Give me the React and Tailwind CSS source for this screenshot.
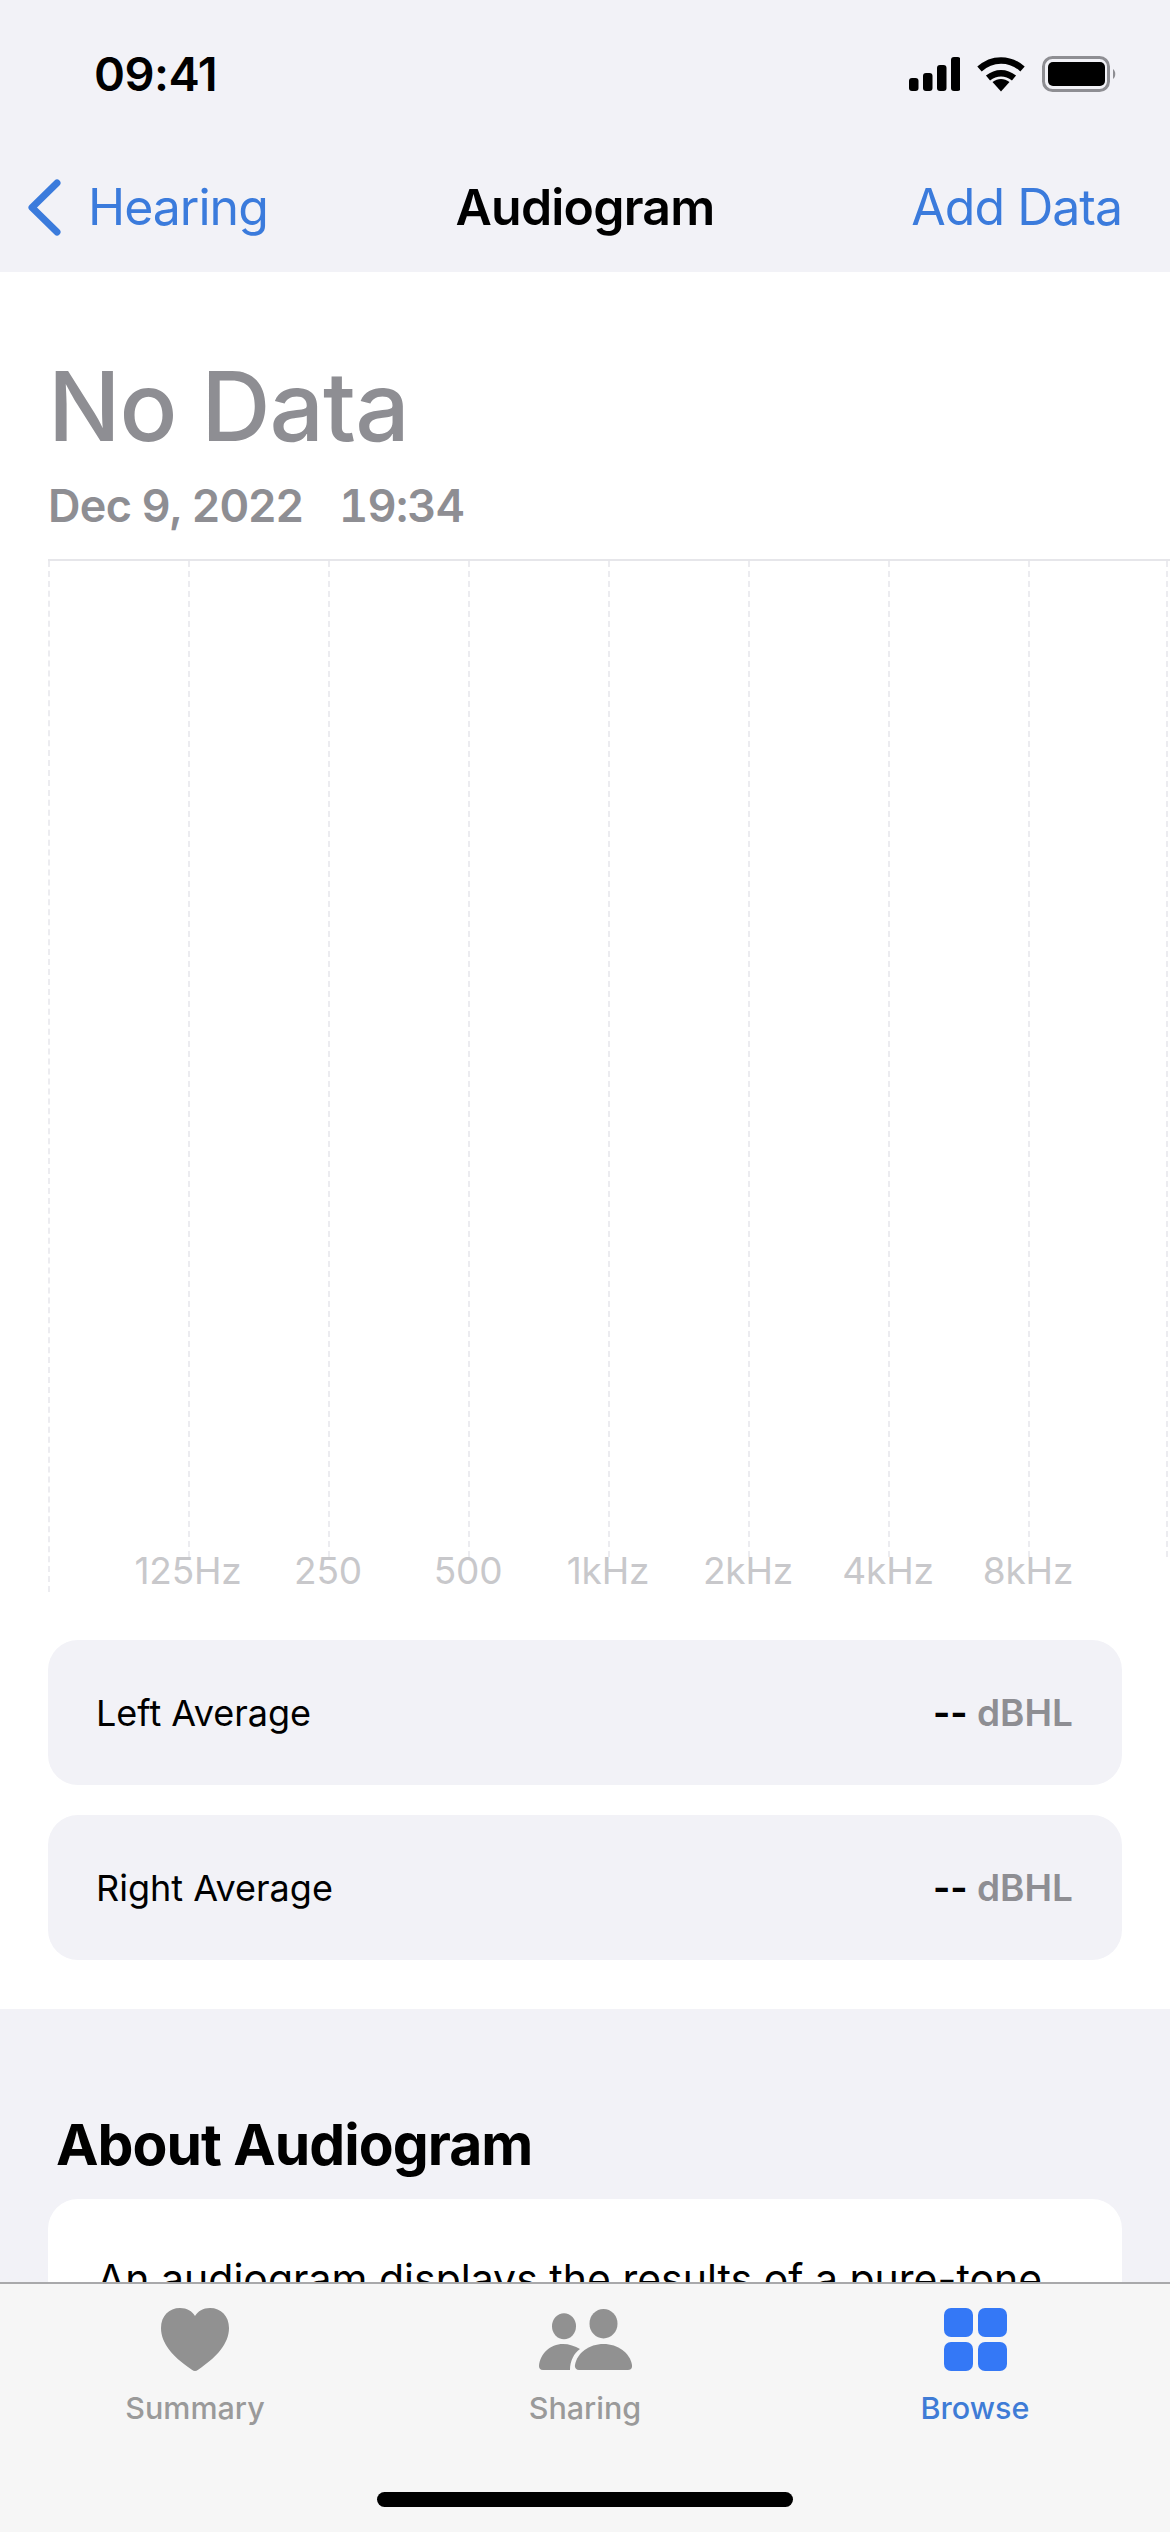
import React from 'react';

const freqs = ['125Hz', '250', '500', '1kHz', '2kHz', '4kHz', '8kHz'];

const StatusIcons = () => (
  <div className="flex items-center">
    <svg width="51" height="34" viewBox="0 0 51 34" fill="#000">
      <rect x="0" y="21" width="9.5" height="13" rx="3" />
      <rect x="14" y="16" width="9.5" height="18" rx="3" />
      <rect x="28" y="8" width="9.5" height="26" rx="3" />
      <rect x="42" y="0" width="9.5" height="34" rx="3" />
    </svg>
    <svg className="ml-[17px]" width="48" height="36" viewBox="0 0 48 36" fill="none" stroke="#000" strokeWidth="6.5">
      <path d="M2.5 13 C15 1.5 33 1.5 45.5 13" />
      <path d="M11 22 C19 15.5 29 15.5 37 22" />
      <path d="M15.500 26 L24 35.500 L32.500 26 C27 22 21 22 15.500 26 Z" fill="#000" stroke="none" />
    </svg>
    <svg className="ml-[17px]" width="75" height="36" viewBox="0 0 75 36">
      <rect x="1.500" y="1.500" width="65" height="33" rx="9" fill="none" stroke="#8e8e93" strokeWidth="3" />
      <rect x="6" y="6" width="57" height="24" rx="5" fill="#000" />
      <path d="M71 13 C74 15 74 21 71 23 Z" fill="#8e8e93" />
    </svg>
  </div>
);

const AverageRow = ({ label }) => (
  <div className="flex h-[145px] items-center justify-between rounded-[30px] bg-[#f2f2f7] pl-[48px] pr-[49px]">
    <span className="text-[36px] text-black">{label}</span>
    <span className="text-[37px] font-semibold text-[#8e8e93]">
      <span className="font-bold text-black">--</span> dBHL
    </span>
  </div>
);

const TabItem = ({ label, active, children }) => (
  <div className="flex flex-col items-center">
    <div className="flex h-[63px] items-center">{children}</div>
    <span className={`mt-[18px] text-[30.5px] leading-[38px] font-medium ${active ? 'text-[#3f7cd6]' : 'text-[#9a9a9a]'}`}>
      {label}
    </span>
  </div>
);

export default function App() {
  return (
    <div className="flex h-[2532px] flex-col overflow-hidden bg-[#f2f2f7] font-['Inter',sans-serif]">
      {/* Status bar + nav */}
      <header className="h-[272px] shrink-0 bg-[#f2f2f7]">
        <div className="flex h-[148px] items-center justify-between pl-[94px] pr-[53px]">
          <span className="text-[47px] font-semibold tracking-[-0.5px] text-black">09:41</span>
          <StatusIcons />
        </div>
        <div className="grid h-[118px] grid-cols-3 items-center px-[28px]">
          <div className="flex items-center text-[50px] tracking-[-1px] text-[#3b7bdc]">
            <svg width="33" height="57" viewBox="0 0 33 57" fill="none" stroke="#3b7bdc" strokeWidth="7" strokeLinecap="round" strokeLinejoin="round">
              <path d="M29 4 L4 28.500 L29 53" />
            </svg>
            <span className="ml-[27px]">Hearing</span>
          </div>
          <div className="text-center text-[50px] font-semibold tracking-[-0.8px] text-black">Audiogram</div>
          <div className="pr-[20px] text-right text-[50px] tracking-[-1px] text-[#3b7bdc]">Add Data</div>
        </div>
      </header>

      {/* Scrolling content, cut off by the tab bar */}
      <main className="min-h-0 flex-1 overflow-hidden">
        <section className="h-[1737px] bg-white pl-[48px] pt-[78px]">
          <h1 className="text-[96px] leading-[112px] font-medium tracking-[-1px] text-[#8e8e93]">No Data</h1>
          <p className="mt-[17px] flex gap-[36px] text-[45px] leading-[54px] font-semibold tracking-[-0.7px] text-[#8e8e93]">
            <span>Dec 9, 2022</span>
            <span className="tabular-nums">19:34</span>
          </p>

          {/* Chart */}
          <div className="relative mt-[26px] flex h-[1033px] border-t-2 border-[#e6e6ea]">
            {[0, 1, 2, 3, 4, 5, 6, 7].map((i) => (
              <div key={i} className={`w-[140px] shrink-0 ${i === 0 ? 'h-full' : 'h-[996px]'} border-l-2 border-dashed border-[#ececf0] ${i === 7 ? 'border-r-2' : ''}`} />
            ))}
            <div className="absolute bottom-0 left-[70px] flex">
              {freqs.map((f) => (
                <span key={f} className="w-[140px] text-center text-[37px] leading-[42px] tracking-[-0.2px] text-[#c8c8cb]">
                  {f}
                </span>
              ))}
            </div>
          </div>

          <div className="mr-[48px] mt-[48px] flex flex-col gap-[30px]">
            <AverageRow label="Left Average" />
            <AverageRow label="Right Average" />
          </div>
        </section>

        <section className="px-[48px]">
          <h2 className="ml-[8px] mt-[104px] text-[57px] leading-[64px] font-bold tracking-[-1px] text-black">About Audiogram</h2>
          <div className="mt-[22px] rounded-[30px] bg-white px-[49px] pt-[50px]">
            <p className="text-[41px] leading-[60px] text-black">An audiogram displays the results of a pure-tone</p>
          </div>
        </section>
      </main>

      {/* Tab bar */}
      <footer className="h-[250px] shrink-0 border-t-2 border-[#a9a9ab] bg-[#f6f6f6]">
        <div className="grid grid-cols-3 pt-[24px]">
          <TabItem label="Summary">
            <svg width="68" height="63" viewBox="0 0 68 63" fill="#919191">
              <path d="M34 63 C32 63 30 61 27 59 C13 49 0 36 0 20 C0 8 8 0 19 0 C26 0 31 3 34 8 C37 3 42 0 49 0 C60 0 68 8 68 20 C68 36 55 49 41 59 C38 61 36 63 34 63 Z" />
            </svg>
          </TabItem>
          <TabItem label="Sharing">
            <svg width="93" height="61" viewBox="0 0 93 61" fill="#919191">
              <ellipse cx="25" cy="17.300" rx="12" ry="13" />
              <ellipse cx="64.500" cy="14.700" rx="14" ry="14.700" />
              <path d="M4 61 C1 61 0 59 0 57 C1 45 11 35 24 35 C30 35 36 37 41 40 C35 44 31 52 31 61 Z" />
              <path d="M40 61 C37 61 35.500 59 36 56 C38 44 50 35 64.500 35 C79 35 91 44 93 56 C93.500 59 92 61 89 61 Z" />
            </svg>
          </TabItem>
          <TabItem label="Browse" active>
            <div className="grid grid-cols-2 gap-[5px]">
              <div className="size-[29px] rounded-[7px] bg-[#3478f6]" />
              <div className="size-[29px] rounded-[7px] bg-[#3478f6]" />
              <div className="size-[29px] rounded-[7px] bg-[#3478f6]" />
              <div className="size-[29px] rounded-[7px] bg-[#3478f6]" />
            </div>
          </TabItem>
        </div>
        <div className="mx-auto mt-[65px] h-[15px] w-[416px] rounded-full bg-black" />
      </footer>
    </div>
  );
}
